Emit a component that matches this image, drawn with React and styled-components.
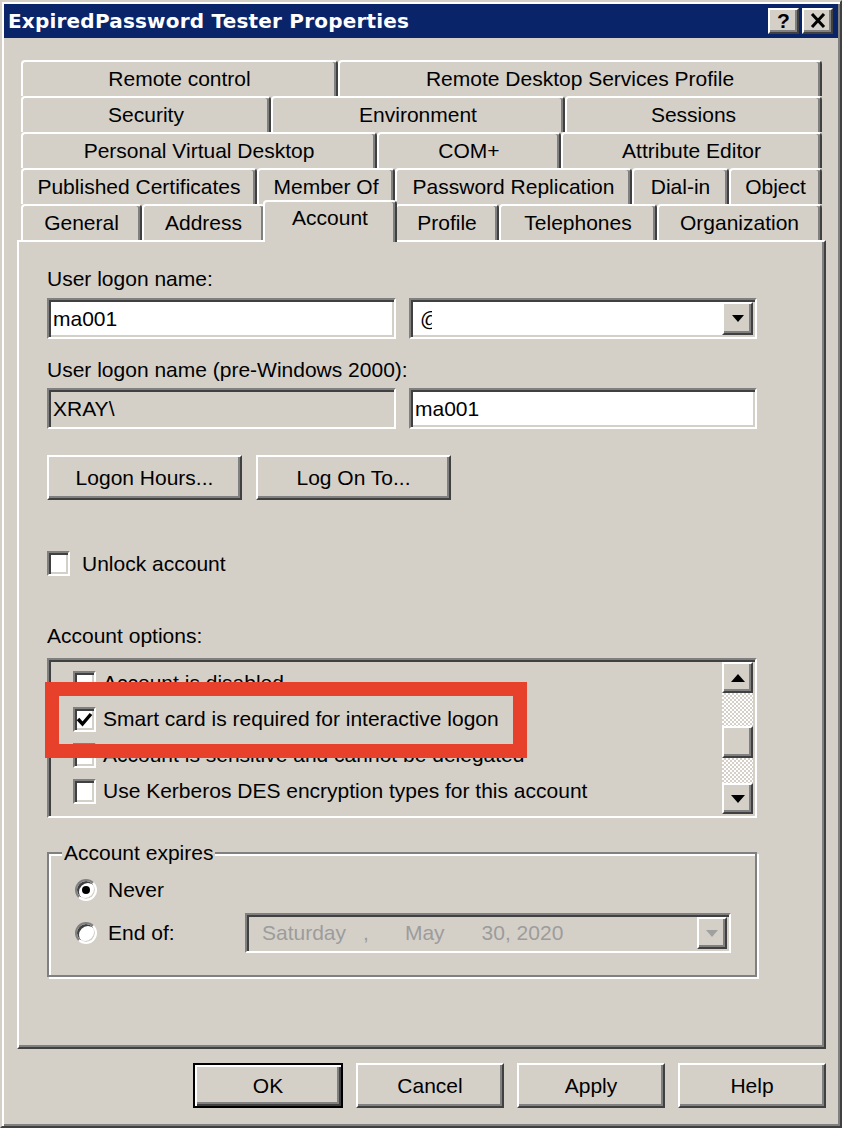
import React from "react";
import styled, { createGlobalStyle, css } from "styled-components";

const GlobalStyle = createGlobalStyle`
  html, body { margin: 0; padding: 0; background: #ffffff; }
  body { font-family: "Liberation Sans", Arial, sans-serif; }
  * { box-sizing: border-box; }
`;

const FACE = "#d4d0c8";

const raised = css`
  border: 2px solid;
  border-color: #ffffff #404040 #404040 #ffffff;
  box-shadow: inset -2px -2px 0 #808080;
`;

const sunken = css`
  border: 2px solid;
  border-color: #808080 #ffffff #ffffff #808080;
  box-shadow: inset 2px 2px 0 #404040, inset -2px -2px 0 ${FACE};
`;

const Window = styled.div`
  width: 842px;
  height: 1128px;
  background: ${FACE};
  border: 2px solid;
  border-color: ${FACE} #404040 #404040 ${FACE};
  box-shadow: inset 2px 2px 0 #ffffff, inset -2px -2px 0 #808080;
  padding: 2px;
  display: flex;
  flex-direction: column;
  font-family: "Liberation Sans", Arial, sans-serif;
  font-size: 21px;
  color: #000;
`;

const TitleBar = styled.div`
  height: 34px;
  background: #0a246a;
  display: flex;
  align-items: center;
  justify-content: space-between;
  padding: 0 5px 0 4px;
`;

const TitleText = styled.div`
  color: #ffffff;
  font-family: "DejaVu Sans", "Liberation Sans", sans-serif;
  font-weight: bold;
  font-size: 20px;
  letter-spacing: 0.2px;
`;

const TitleButtons = styled.div`
  display: flex;
  gap: 3px;
`;

const TitleButton = styled.div`
  ${raised};
  width: 31px;
  height: 26px;
  background: ${FACE};
  display: flex;
  align-items: center;
  justify-content: center;
  font-family: "Liberation Sans", Arial, sans-serif;
  font-weight: bold;
  font-size: 21px;
  line-height: 1;
  padding-bottom: 1px;
`;

const Body = styled.div`
  padding: 22px 12px 0 13px;
  display: flex;
  flex-direction: column;
`;

const TabStrip = styled.div`
  display: flex;
  flex-direction: column;
  padding: 0 4px;
`;

const TabRow = styled.div`
  display: flex;
  height: 36px;
`;

const Tab = styled.div`
  flex: none;
  width: ${(p) => p.$w}px;
  height: 36px;
  border-top: 2px solid #ffffff;
  border-left: 2px solid #ffffff;
  border-right: 2px solid #404040;
  box-shadow: inset -2px 0 0 #808080;
  border-radius: 4px 4px 0 0;
  background: ${FACE};
  display: flex;
  justify-content: center;
  align-items: flex-start;
  line-height: 33px;
  white-space: nowrap;
  ${(p) =>
    p.$active &&
    css`
      width: ${p.$w + 4}px;
      height: 42px;
      margin: -4px -2px -2px;
      position: relative;
      z-index: 1;
      line-height: 31px;
    `}
`;

const Panel = styled.div`
  height: 809px;
  border: 2px solid;
  border-color: #ffffff #404040 #404040 #ffffff;
  box-shadow: inset -2px -2px 0 #808080;
  padding: 25px 0 0 28px;
  display: flex;
  flex-direction: column;
  align-items: flex-start;
`;

const Label = styled.div`
  height: 24px;
  line-height: 24px;
  margin-top: ${(p) => p.$mt || 0}px;
  white-space: nowrap;
`;

const FieldRow = styled.div`
  display: grid;
  grid-template-columns: 349px 348px;
  column-gap: 13px;
  margin-top: ${(p) => p.$mt || 0}px;
`;

const TextField = styled.div`
  ${sunken};
  height: 41px;
  background: ${(p) => (p.$disabled ? FACE : "#ffffff")};
  display: flex;
  align-items: center;
  padding: 2px 2px 2px 4px;
  white-space: nowrap;
  overflow: hidden;
`;

const ComboValue = styled.div`
  flex: 1;
  display: flex;
  align-items: center;
  padding-left: 5px;
  height: 100%;
`;

const Redact = styled.span`
  display: inline-block;
  width: 224px;
  height: 21px;
  background: #ffffff;
  margin-left: -9px;
  margin-top: 2px;
  position: relative;
`;

const DropButton = styled.div`
  ${raised};
  width: 31px;
  height: 100%;
  background: ${FACE};
  display: flex;
  align-items: center;
  justify-content: center;
`;

const ButtonRow = styled.div`
  display: flex;
  gap: ${(p) => p.$gap || 14}px;
  margin-top: ${(p) => p.$mt || 0}px;
  justify-content: ${(p) => (p.$end ? "flex-end" : "flex-start")};
  align-self: stretch;
`;

const Button = styled.div`
  ${raised};
  width: ${(p) => p.$w}px;
  height: 45px;
  background: ${FACE};
  display: flex;
  align-items: center;
  justify-content: center;
  white-space: nowrap;
  ${(p) =>
    p.$default &&
    css`
      border: 2px solid #000000;
      box-shadow: inset 2px 2px 0 #ffffff, inset -2px -2px 0 #404040,
        inset -4px -4px 0 #808080;
    `}
`;

const CheckRow = styled.div`
  display: flex;
  align-items: center;
  gap: ${(p) => p.$gap || 12}px;
  margin-top: ${(p) => p.$mt || 0}px;
  height: ${(p) => p.$h || 25}px;
  white-space: nowrap;
`;

const CheckBox = styled.div`
  ${sunken};
  flex: none;
  width: 23px;
  height: 25px;
  background: #ffffff;
  display: flex;
  align-items: center;
  justify-content: center;
`;

const ListBox = styled.div`
  ${sunken};
  position: relative;
  margin-top: 10px;
  width: 710px;
  height: 160px;
  padding: 2px;
  background: ${FACE};
  display: flex;
`;

const ListItems = styled.div`
  flex: 1;
  overflow: hidden;
  padding-top: 3px;
`;

const ListItem = styled(CheckRow)`
  height: 36px;
  padding-left: 22px;
  gap: 7px;
`;

const ScrollBar = styled.div`
  width: 31px;
  display: flex;
  flex-direction: column;
`;

const ScrollButton = styled.div`
  ${raised};
  flex: none;
  height: ${(p) => p.$h || 31}px;
  background: ${FACE};
  display: flex;
  align-items: center;
  justify-content: center;
`;

const ScrollTrack = styled.div`
  flex: ${(p) => p.$grow};
  background-color: #ffffff;
  background-image: repeating-conic-gradient(${FACE} 0 25%, #ffffff 0 50%);
  background-size: 4px 4px;
`;

const Highlight = styled.div`
  position: absolute;
  left: -4px;
  top: 22px;
  width: 482px;
  height: 76px;
  border: 14px solid #e8412b;
  pointer-events: none;
`;

const GroupBox = styled.fieldset`
  margin: 23px 0 0;
  width: 710px;
  border: 2px solid #808080;
  box-shadow: inset 2px 2px 0 #ffffff, 2px 2px 0 #ffffff;
  padding: 13px 0 22px 26px;
  min-width: 0;
`;

const Legend = styled.legend`
  margin-left: -13px;
  padding: 0 2px;
  height: 24px;
  line-height: 24px;
  background: ${FACE};
`;

const RadioRow = styled.div`
  display: flex;
  align-items: center;
  height: ${(p) => p.$h || 24}px;
  margin-top: ${(p) => p.$mt || 0}px;
  white-space: nowrap;
`;

const Radio = styled.div`
  flex: none;
  width: 22px;
  height: 22px;
  border-radius: 50%;
  border: 2px solid;
  border-color: #808080 #ffffff #ffffff #808080;
  box-shadow: inset 2px 2px 0 #404040, inset -1px -1px 0 ${FACE};
  background: #ffffff;
  display: flex;
  align-items: center;
  justify-content: center;
  margin-right: 11px;
`;

const RadioDot = styled.div`
  width: 8px;
  height: 8px;
  border-radius: 50%;
  background: #000;
`;

const RadioLabel = styled.span`
  width: ${(p) => p.$w || "auto"};
`;

const DateField = styled(TextField)`
  width: 486px;
  height: 40px;
  padding-left: 15px;
  color: #9c9c9c;
`;

const DateSeg = styled.span`
  margin-left: ${(p) => p.$ml || 0}px;
`;

const DateDrop = styled(DropButton)`
  margin-left: auto;
  width: 30px;
`;

const Arrow = ({ dir = "down", color = "#000", w = 12, h = 7 }) => (
  <svg width={w} height={h} viewBox={`0 0 ${w} ${h}`}>
    {dir === "down" ? (
      <polygon points={`0,0 ${w},0 ${w / 2},${h}`} fill={color} />
    ) : (
      <polygon points={`0,${h} ${w},${h} ${w / 2},0`} fill={color} />
    )}
  </svg>
);

const CloseGlyph = () => (
  <svg width="16" height="15" viewBox="0 0 16 15">
    <path d="M2 1 L14 14 M14 1 L2 14" stroke="#000" strokeWidth="3" />
  </svg>
);

const Check = () => (
  <svg width="19" height="19" viewBox="0 0 19 19">
    <path d="M3 9 L7.5 14 L16 4" stroke="#000" strokeWidth="3.4" fill="none" />
  </svg>
);

const tabRows = [
  [
    { label: "Remote control", w: 317 },
    { label: "Remote Desktop Services Profile", w: 484 },
  ],
  [
    { label: "Security", w: 250 },
    { label: "Environment", w: 294 },
    { label: "Sessions", w: 257 },
  ],
  [
    { label: "Personal Virtual Desktop", w: 356 },
    { label: "COM+", w: 184 },
    { label: "Attribute Editor", w: 261 },
  ],
  [
    { label: "Published Certificates", w: 236 },
    { label: "Member Of", w: 138 },
    { label: "Password Replication", w: 237 },
    { label: "Dial-in", w: 97 },
    { label: "Object", w: 93 },
  ],
  [
    { label: "General", w: 121 },
    { label: "Address", w: 123 },
    { label: "Account", w: 130, active: true },
    { label: "Profile", w: 104 },
    { label: "Telephones", w: 158 },
    { label: "Organization", w: 165 },
  ],
];

const options = [
  { label: "Account is disabled", checked: false },
  { label: "Smart card is required for interactive logon", checked: true },
  { label: "Account is sensitive and cannot be delegated", checked: false },
  { label: "Use Kerberos DES encryption types for this account", checked: false },
  { label: "", checked: false },
];

export default function App() {
  return (
    <>
      <GlobalStyle />
      <Window>
        <TitleBar>
          <TitleText>ExpiredPassword Tester Properties</TitleText>
          <TitleButtons>
            <TitleButton>?</TitleButton>
            <TitleButton>
              <CloseGlyph />
            </TitleButton>
          </TitleButtons>
        </TitleBar>
        <Body>
          <TabStrip>
            {tabRows.map((row, i) => (
              <TabRow key={i}>
                {row.map((t) => (
                  <Tab key={t.label} $w={t.w} $active={t.active}>
                    {t.label}
                  </Tab>
                ))}
              </TabRow>
            ))}
          </TabStrip>
          <Panel>
            <Label>User logon name:</Label>
            <FieldRow $mt={7}>
              <TextField>ma001</TextField>
              <TextField>
                <ComboValue>
                  <span>@</span>
                  <Redact />
                </ComboValue>
                <DropButton>
                  <Arrow />
                </DropButton>
              </TextField>
            </FieldRow>
            <Label $mt={19}>User logon name (pre-Windows 2000):</Label>
            <FieldRow $mt={6}>
              <TextField $disabled>XRAY\</TextField>
              <TextField>ma001</TextField>
            </FieldRow>
            <ButtonRow $mt={26}>
              <Button $w={195}>Logon Hours...</Button>
              <Button $w={195}>Log On To...</Button>
            </ButtonRow>
            <CheckRow $mt={51}>
              <CheckBox />
              <span>Unlock account</span>
            </CheckRow>
            <Label $mt={48}>Account options:</Label>
            <ListBox>
              <ListItems>
                {options.map((o, i) => (
                  <ListItem key={i}>
                    <CheckBox>{o.checked && <Check />}</CheckBox>
                    {o.label && <span>{o.label}</span>}
                  </ListItem>
                ))}
              </ListItems>
              <ScrollBar>
                <ScrollButton>
                  <Arrow dir="up" w={14} h={8} />
                </ScrollButton>
                <ScrollTrack $grow={33} />
                <ScrollButton $h={32} />
                <ScrollTrack $grow={25} />
                <ScrollButton>
                  <Arrow w={14} h={8} />
                </ScrollButton>
              </ScrollBar>
              <Highlight />
            </ListBox>
            <GroupBox>
              <Legend>Account expires</Legend>
              <RadioRow>
                <Radio>
                  <RadioDot />
                </Radio>
                <RadioLabel>Never</RadioLabel>
              </RadioRow>
              <RadioRow $mt={11} $h={40}>
                <Radio />
                <RadioLabel $w="137px">End of:</RadioLabel>
                <DateField $disabled>
                  <DateSeg>Saturday</DateSeg>
                  <DateSeg $ml={17}>,</DateSeg>
                  <DateSeg $ml={36}>May</DateSeg>
                  <DateSeg $ml={37}>30, 2020</DateSeg>
                  <DateDrop>
                    <Arrow color="#a0a0a0" />
                  </DateDrop>
                </DateField>
              </RadioRow>
            </GroupBox>
          </Panel>
          <ButtonRow $mt={14} $gap={13} $end>
            <Button $w={150} $default>
              OK
            </Button>
            <Button $w={148}>Cancel</Button>
            <Button $w={148}>Apply</Button>
            <Button $w={148}>Help</Button>
          </ButtonRow>
        </Body>
      </Window>
    </>
  );
}
